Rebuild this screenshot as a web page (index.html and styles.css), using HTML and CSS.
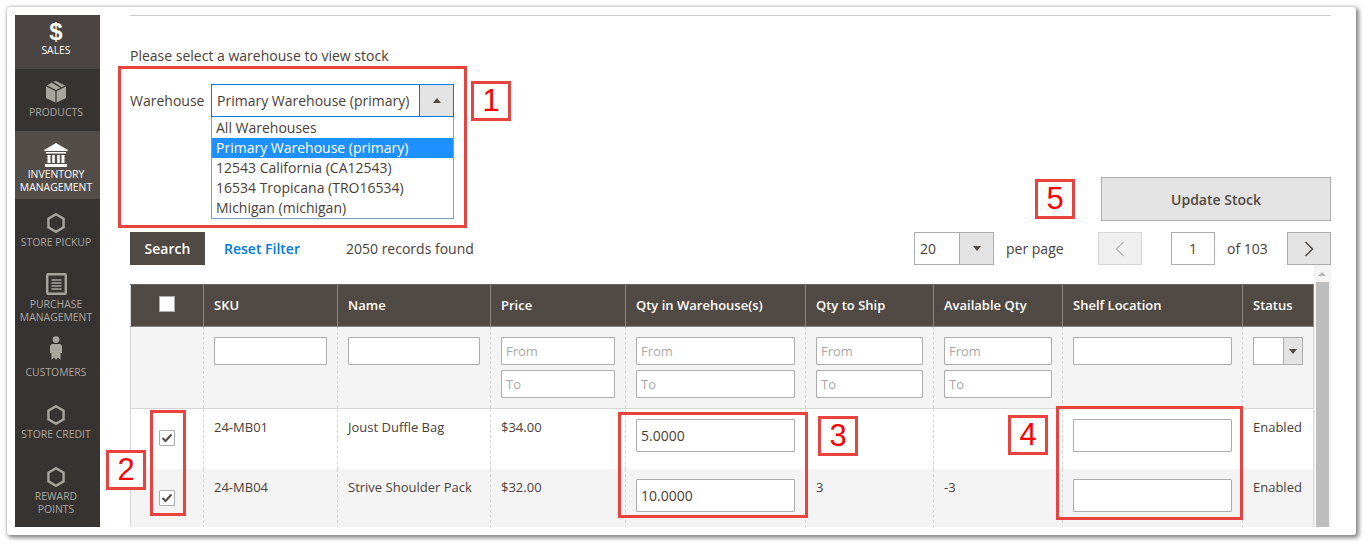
FILE: index.html
```html
<!DOCTYPE html>
<html lang="en">
<head>
<meta charset="utf-8">
<title>Inventory Management</title>
<link rel="stylesheet" href="styles.css">
</head>
<body>
<div class="card">
  <nav class="side">
    <a class="nav nav-sales"><span class="dollar">$</span><span>SALES</span></a>
    <a class="nav nav-products">
      <svg class="ico" width="20" height="22" viewBox="0 0 20 22"><path fill="#a8a49e" d="M0 5.5 9.4 10v11.6L0 17zM20 5.5 10.6 10v11.6L20 17z"/><path fill="#a8a49e" d="M7 .6 10 0l9 4.6-3.2 1.6zM5.6 1.4 14.5 6.8 10 9 1 4.4z"/></svg>
      <span>PRODUCTS</span></a>
    <a class="nav nav-inventory">
      <svg class="ico" width="24" height="24" viewBox="0 0 24 24"><path fill="#fff" d="M12 0 24 7v1H0V7zM2 9h20v1.6H2zM3.5 12h3v8h-3zM8.2 12h2.6v8H8.2zM13.2 12h2.6v8h-2.6zM17.5 12h3v8h-3zM1 21h22v3H1z"/></svg>
      <span>INVENTORY<br>MANAGEMENT</span></a>
    <a class="nav nav-pickup">
      <svg class="ico" width="18" height="20" viewBox="0 0 18 20"><path class="hex" d="M9 1.2 16.6 5.6v8.8L9 18.8 1.4 14.4V5.6z"/></svg>
      <span>STORE PICKUP</span></a>
    <a class="nav nav-purchase">
      <svg class="ico" width="21" height="22" viewBox="0 0 21 22"><rect x="1.2" y="1.2" width="18.6" height="19.6" rx="1" fill="none" stroke="#a8a49e" stroke-width="2.4"/><path stroke="#a8a49e" stroke-width="1.4" d="M5.5 7h10M5.5 10h10M5.5 13h10M5.5 16h10"/></svg>
      <span>PURCHASE<br>MANAGEMENT</span></a>
    <a class="nav nav-customers">
      <svg class="ico" width="12" height="24" viewBox="0 0 12 24"><circle cx="6" cy="3.6" r="3.4" fill="#a8a49e"/><path fill="#a8a49e" d="M1.6 8h8.8L12 10v7h-1.4v7L8 21.5 6 24l-2-2.500L1.400 24v-7H0v-7z"/></svg>
      <span>CUSTOMERS</span></a>
    <a class="nav nav-credit">
      <svg class="ico" width="18" height="20" viewBox="0 0 18 20"><path class="hex" d="M9 1.2 16.6 5.6v8.8L9 18.800 1.400 14.400V5.600z"/></svg>
      <span>STORE CREDIT</span></a>
    <a class="nav nav-reward">
      <svg class="ico" width="18" height="20" viewBox="0 0 18 20"><path class="hex" d="M9 1.2 16.6 5.6v8.8L9 18.800 1.400 14.400V5.600z"/></svg>
      <span>REWARD<br>POINTS</span></a>
  </nav>
  <main class="main">
    <hr class="rule">
    <div class="top">
      <div class="top-left">
        <p class="hint">Please select a warehouse to view stock</p>
        <div class="wh-row">
          <span class="wh-label">Warehouse</span>
          <div class="wh-select">
            <div class="wh-head">
              <span class="wh-value">Primary Warehouse (primary)</span>
              <span class="wh-arrow"><i class="tri-up"></i></span>
            </div>
            <ul class="wh-list">
              <li>All Warehouses</li>
              <li class="sel">Primary Warehouse (primary)</li>
              <li>12543 California (CA12543)</li>
              <li>16534 Tropicana (TRO16534)</li>
              <li>Michigan (michigan)</li>
            </ul>
          </div>
        </div>
      </div>
      <button class="update">Update Stock</button>
    </div>
    <div class="toolbar">
      <button class="search">Search</button>
      <a class="reset">Reset Filter</a>
      <span class="found">2050 records found</span>
      <div class="pager">
        <div class="perpage"><span class="pp-val">20</span><span class="pp-arrow"><i class="tri-down"></i></span></div>
        <span class="pp-label">per page</span>
        <button class="pg prev"><svg width="10" height="16" viewBox="0 0 10 16"><path d="M8.500 1 1.500 8l7 7" fill="none" stroke="#bdbdbd" stroke-width="1.500"/></svg></button>
        <span class="pg-num">1</span>
        <span class="pg-of">of 103</span>
        <button class="pg next"><svg width="10" height="16" viewBox="0 0 10 16"><path d="M1.500 1l7 7-7 7" fill="none" stroke="#514943" stroke-width="1.500"/></svg></button>
      </div>
    </div>
    <div class="grid-wrap">
      <table class="grid">
        <colgroup>
          <col class="c1"><col class="c2"><col class="c3"><col class="c4"><col class="c5"><col class="c6"><col class="c7"><col class="c8"><col class="c9">
        </colgroup>
        <thead>
          <tr>
            <th class="center"><span class="head-check"></span></th>
            <th>SKU</th><th>Name</th><th>Price</th><th>Qty in Warehouse(s)</th><th>Qty to Ship</th><th>Available Qty</th><th>Shelf Location</th><th>Status</th>
          </tr>
        </thead>
        <tbody>
          <tr class="filters">
            <td></td>
            <td><div class="inp"></div></td>
            <td><div class="inp"></div></td>
            <td><div class="inp ph">From</div><div class="inp ph">To</div></td>
            <td><div class="inp ph">From</div><div class="inp ph">To</div></td>
            <td><div class="inp ph">From</div><div class="inp ph">To</div></td>
            <td><div class="inp ph">From</div><div class="inp ph">To</div></td>
            <td><div class="inp"></div></td>
            <td><div class="status-sel"><span></span><b><i class="tri-down small"></i></b></div></td>
          </tr>
          <tr class="row r1">
            <td class="center"><span class="check"><svg width="12" height="10" viewBox="0 0 12 10"><path d="M1.500 5 4.500 8 10.500 1.500" fill="none" stroke="#514943" stroke-width="2"/></svg></span></td>
            <td>24-MB01</td><td>Joust Duffle Bag</td><td>$34.00</td>
            <td><div class="inp qty">5.0000</div></td>
            <td></td><td></td>
            <td><div class="inp qty"></div></td>
            <td>Enabled</td>
          </tr>
          <tr class="row r2">
            <td class="center"><span class="check"><svg width="12" height="10" viewBox="0 0 12 10"><path d="M1.500 5 4.500 8 10.500 1.500" fill="none" stroke="#514943" stroke-width="2"/></svg></span></td>
            <td>24-MB04</td><td>Strive Shoulder Pack</td><td>$32.00</td>
            <td><div class="inp qty">10.0000</div></td>
            <td>3</td><td>-3</td>
            <td><div class="inp qty"></div></td>
            <td>Enabled</td>
          </tr>
        </tbody>
      </table>
      <div class="scroll"><i class="tri-up sc"></i><div class="thumb"></div></div>
    </div>
  </main>
  <div class="mark m-wh"></div>
  <div class="mark m-check"></div>
  <div class="mark m-qty"></div>
  <div class="mark m-shelf"></div>
  <div class="num n1">1</div>
  <div class="num n2">2</div>
  <div class="num n3">3</div>
  <div class="num n4">4</div>
  <div class="num n5">5</div>
</div>
</body>
</html>
```
FILE: styles.css
```css
* { box-sizing: border-box; }
html, body { margin: 0; padding: 0; background: #fff; }
body { width: 1369px; height: 548px; overflow: hidden; font-family: "Open Sans", sans-serif; font-size: 14px; color: #4a403a; }
.card {
  position: relative;
  margin: 7px 0 0 7px;
  width: 1349px;
  height: 528px;
  background: #fff;
  border-radius: 3px;
  box-shadow: 2px 2px 4px 1px #8a8a8a, 0 0 3px rgba(0,0,0,.25);
  padding: 8px 0 8px 8px;
  display: flex;
  overflow: hidden;
}
.side { width: 85px; height: 512px; background: #373330; flex: none; display: flex; flex-direction: column; }
.nav { display: flex; flex-direction: column; align-items: center; color: #aaa6a0; font-size: 10.4px; line-height: 13px; text-align: center; padding-right: 3px; }
.nav .ico { display: block; }
.nav-sales { height: 54px; background: #4a4542; color: #fff; }
.dollar { font-family: "Liberation Sans", sans-serif; font-weight: 700; font-size: 24px; line-height: 24px; margin-top: 5px; margin-bottom: 0; }
.nav-products { height: 62px; padding-top: 12px; }
.nav-products .ico { margin-bottom: 3px; }
.nav-inventory { height: 68px; background: #524d49; color: #fff; padding-top: 12px; }
.nav-inventory .ico { margin-bottom: 1px; }
.nav-pickup { height: 65px; padding-top: 14px; }
.nav-pickup .ico { margin-bottom: 3px; }
.nav-purchase { height: 69px; padding-top: 9px; }
.nav-purchase .ico { margin-bottom: 3px; }
.nav-customers { height: 62px; padding-top: 3px; }
.nav-customers .ico { margin-bottom: 6px; }
.nav-credit { height: 62px; padding-top: 10px; }
.nav-credit .ico { margin-bottom: 3px; }
.nav-reward { height: 70px; padding-top: 10px; }
.nav-reward .ico { margin-bottom: 3px; }
.hex { fill: none; stroke: #a8a49e; stroke-width: 2.400; }

.main { width: 1201px; margin-left: 30px; flex: none; }
.rule { margin: 0; border: 0; border-top: 1px solid #ccc; height: 1px; }
.top { display: flex; justify-content: space-between; align-items: flex-end; height: 205px; }
.top-left { padding-top: 30px; align-self: flex-start; }
.hint { margin: 0; line-height: 20px; height: 38px; }
.wh-row { display: flex; align-items: flex-start; }
.wh-label { width: 81px; line-height: 33px; }
.wh-select { width: 243px; }
.wh-head { height: 33px; border: 1px solid #007bdb; display: flex; line-height: 31px; }
.wh-value { flex: 1; padding-left: 5px; }
.wh-arrow { width: 34px; background: #e3e3e3; border-left: 1px solid #007bdb; display: flex; align-items: center; justify-content: center; }
.wh-list { list-style: none; margin: 0; padding: 0; border: 1px solid #7f9db9; border-top: 0; height: 102px; line-height: 20px; padding-top: 1px; }
.wh-list li { padding-left: 4px; height: 20px; }
.wh-list .sel { background: #1e90ff; color: #fff; }
.tri-up, .tri-down { display: block; width: 0; height: 0; border-left: 4px solid transparent; border-right: 4px solid transparent; }
.tri-up { border-bottom: 5px solid #514943; }
.tri-down { border-top: 5px solid #514943; }
.tri-down.small { border-left-width: 4px; border-right-width: 4px; border-top-width: 5px; }
.update { width: 230px; height: 44px; background: #e3e3e3; border: 1px solid #adadad; color: #514943; font: 600 14px "Open Sans", sans-serif; padding: 0; }

.toolbar { display: flex; align-items: center; height: 33px; margin-top: 11px; }
.search { width: 75px; height: 33px; background: #514943; color: #fff; border: 0; font: 600 14px "Open Sans", sans-serif; padding: 0; }
.reset { color: #007bdb; font-weight: 600; margin-left: 19px; }
.found { margin-left: 46px; }
.pager { margin-left: auto; display: flex; align-items: center; }
.perpage { width: 80px; height: 33px; border: 1px solid #adadad; display: flex; line-height: 31px; }
.pp-val { flex: 1; padding-left: 5px; }
.pp-arrow { width: 34px; background: #e3e3e3; border-left: 1px solid #adadad; display: flex; align-items: center; justify-content: center; }
.pp-label { margin-left: 12px; width: 58px; }
.pg { width: 44px; height: 33px; padding: 0; display: flex; align-items: center; justify-content: center; }
.prev { margin-left: 34px; background: #efefef; border: 1px solid #d8d8d8; }
.next { margin-left: 20px; background: #e3e3e3; border: 1px solid #adadad; }
.pg-num { margin-left: 29px; width: 44px; height: 33px; border: 1px solid #adadad; text-align: center; line-height: 31px; }
.pg-of { margin-left: 12px; width: 40px; white-space: nowrap; }

.grid-wrap { display: flex; height: 262px; overflow: hidden; }
.grid { width: 1183px; table-layout: fixed; border-collapse: collapse; margin-top: 19px; font-size: 13px; height: 243px; flex: none; }
.c1 { width: 73px; } .c2 { width: 134px; } .c3 { width: 153px; } .c4 { width: 135px; } .c5 { width: 180px; } .c6 { width: 128px; } .c7 { width: 129px; } .c8 { width: 180px; } .c9 { width: 71px; }
.grid th { height: 42px; background: #514943; color: #fff; font-weight: 600; font-size: 13px; text-align: left; padding: 0 10px 2px; border: 1px solid #8a837e; border-top-color: #6e6660; white-space: nowrap; }
.grid td { vertical-align: top; padding: 0 10px; border-left: 1px dashed #d6d6d6; border-right: 1px dashed #d6d6d6; }
.grid td:first-child, .grid th:first-child { border-left: 1px solid #d6d6d6; }
.grid td:last-child { border-right: 1px solid #d6d6d6; }
.grid .center { text-align: center; }
.head-check { display: block; width: 16px; height: 16px; margin: 0 auto 2px; background: #fff; border: 1px solid #adadad; }
.filters td { background: #f4f4f4; height: 82px; padding-top: 10px; border-bottom: 1px solid #d6d6d6; }
.inp { height: 28px; background: #fff; border: 1px solid #adadad; border-radius: 1px; padding-left: 4px; line-height: 26px; }
.inp + .inp { margin-top: 5px; }
.ph { color: #a9a9a9; }
.status-sel { width: 50px; height: 28px; display: flex; border: 1px solid #adadad; background: #fff; }
.status-sel span { flex: 1; }
.status-sel b { width: 19px; background: #e3e3e3; border-left: 1px solid #adadad; display: flex; align-items: center; justify-content: center; }
.row td { padding-top: 9px; line-height: 18px; }
.r1 td { height: 60px; }
.r2 td { height: 59px; background: #f4f4f4; }
.inp.qty { height: 33px; line-height: 31px; font-size: 14px; padding-left: 4px; margin-top: 1px; }
.check { display: flex; align-items: center; justify-content: center; width: 16px; height: 16px; margin: 12px auto 0; background: #fff; border: 1px solid #adadad; border-radius: 1px; }
.scroll { flex: 1; background: #f4f4f4; position: relative; padding-top: 17px; }
.tri-up.sc { position: absolute; top: 7px; left: 4px; border-bottom: 4px solid #b5b5b5; }
.thumb { width: 13px; margin-left: 2px; height: 246px; background: #bdbdbd; }

.mark { position: absolute; border: 3px solid #e8433f; pointer-events: none; }
.m-wh { left: 111px; top: 59px; width: 349px; height: 162px; }
.m-check { left: 143px; top: 403px; width: 36px; height: 106px; }
.m-qty { left: 611px; top: 405px; width: 190px; height: 106px; }
.m-shelf { left: 1049px; top: 399px; width: 187px; height: 114px; }
.num { position: absolute; width: 40px; height: 40px; border: 3px solid #e8433f; background: #fff; color: #f00; font: 31px/34px "Liberation Sans", sans-serif; text-align: center; }
.n1 { left: 464px; top: 74px; }
.n2 { left: 99px; top: 443px; }
.n3 { left: 811px; top: 409px; }
.n4 { left: 1001px; top: 408px; }
.n5 { left: 1028px; top: 172px; }
```
